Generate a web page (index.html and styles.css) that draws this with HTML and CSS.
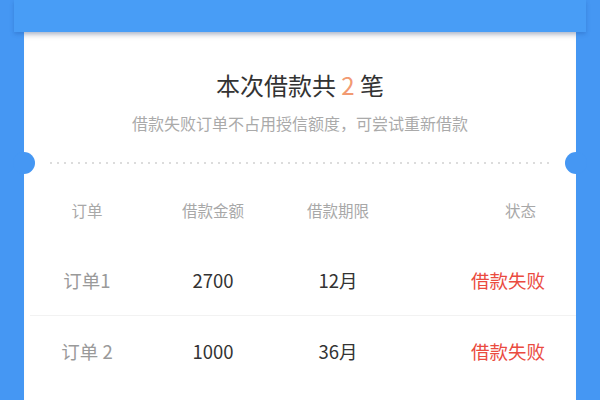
FILE: index.html
```html
<!DOCTYPE html>
<html lang="zh">
<head>
<meta charset="utf-8">
<link rel="stylesheet" href="styles.css">
</head>
<body>
<div class="slot"></div>
<div class="card">
  <div class="title">本次借款共 <span class="num">2</span> 笔</div>
  <div class="sub">借款失败订单不占用授信额度，可尝试重新借款</div>
  <div class="divider">
    <span class="notch notch-l"></span>
    <span class="dots"></span>
    <span class="notch notch-r"></span>
  </div>
  <div class="row head">
    <div class="c">订单</div>
    <div class="c">借款金额</div>
    <div class="c">借款期限</div>
    <div class="r r-head">状态</div>
  </div>
  <div class="row item">
    <div class="c label">订单1</div>
    <div class="c val">2700</div>
    <div class="c val">12月</div>
    <div class="r fail">借款失败</div>
  </div>
  <div class="sep"></div>
  <div class="row item">
    <div class="c label">订单 2</div>
    <div class="c val">1000</div>
    <div class="c val">36月</div>
    <div class="r fail">借款失败</div>
  </div>
</div>
</body>
</html>
```
FILE: styles.css
```css
html, body {
  margin: 0;
  padding: 0;
  height: 100%;
  overflow: hidden;
}
body {
  background: #4597f3;
  font-family: "Noto Sans CJK SC", "Noto Sans", sans-serif;
}
.slot {
  height: 32px;
  margin: 0 14px;
  background: #489df6;
  box-shadow: 0 2px 4px rgba(20, 60, 140, 0.25);
  position: relative;
  z-index: 1;
}
.card {
  margin: 0 24px;
  height: 368px;
  background: #fff;
  box-shadow: inset 0 7px 6px -4px rgba(0, 0, 0, 0.13);
}
.title {
  padding-top: 38px;
  text-align: center;
  font-size: 24px;
  line-height: 30px;
  color: #333;
}
.num {
  color: #f29a72;
}
.sub {
  margin-top: 12px;
  text-align: center;
  font-size: 16px;
  line-height: 22px;
  color: #aaa;
}
.divider {
  position: relative;
  height: 22px;
  margin-top: 18px;
  display: flex;
  align-items: center;
}
.dots {
  flex: 1;
  height: 2px;
  margin: 0 26px;
  background-image: linear-gradient(to right, #dcdcdc 2px, transparent 2px);
  background-size: 7px 2px;
}
.notch {
  position: absolute;
  top: 0;
  width: 22px;
  height: 22px;
  border-radius: 50%;
  background: #4597f3;
}
.notch-l { left: -11px; }
.notch-r { right: -11px; }
.row {
  display: grid;
  grid-template-columns: 126px 126px 124px 1fr;
  align-items: center;
}
.head {
  height: 71px;
  font-size: 15.5px;
  color: #a8a8a8;
}
.item {
  height: 70px;
  font-size: 18.5px;
}
.c { text-align: center; }
.r { text-align: right; }
.r-head { padding-right: 40px; }
.label { color: #9a9a9a; }
.val { color: #333; }
.fail { color: #ea4b3f; padding-right: 31px; }
.sep {
  height: 1px;
  margin-left: 6px;
  background: #f2f2f2;
}
```
